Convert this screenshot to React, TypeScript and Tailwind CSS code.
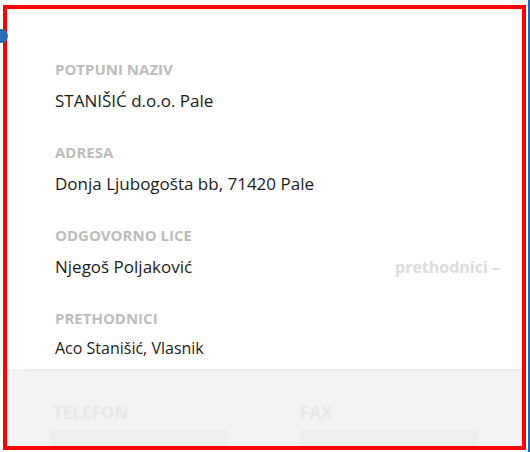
import React from 'react';

const rows = [
  { label: 'Potpuni naziv', value: 'STANIŠIĆ d.o.o. Pale' },
  { label: 'Adresa', value: 'Donja Ljubogošta bb, 71420 Pale' },
  { label: 'Odgovorno lice', value: 'Njegoš Poljaković', extra: 'prethodnici –' },
];

export default function App() {
  return (
    <div
      className="relative w-[530px] h-[452px] overflow-hidden bg-white pt-[5px] pl-[3px] pr-[4px]"
      style={{ fontFamily: '"Open Sans", "Noto Sans", sans-serif' }}
    >
      {/* blue edge on the right */}
      <div className="absolute right-0 top-0 h-full w-[2px] bg-[#1f68b3]" />
      {/* blue handle peeking from the left */}
      <div className="absolute left-[-6px] top-[29px] z-20 h-[14px] w-[14px] rounded-full bg-[#2a6cb6]" />

      <div className="relative z-10 flex h-[445px] w-[523px] flex-col overflow-hidden border-4 border-[#ff0000]">
        <div className="bg-white pl-[48px] pr-[22px] pt-[50px] pb-[10px]">
          {rows.map((r) => (
            <div key={r.label} className="mb-[29px]">
              <div className="text-[15px] font-bold uppercase leading-[20px] text-[#bdbdbd]">{r.label}</div>
              <div className="mt-[10px] flex items-baseline justify-between">
                <span className="text-[17px] leading-[24px] text-[#1c1c1c]">{r.value}</span>
                {r.extra && (
                  <span className="text-[16px] font-bold text-[#dcdcdc]">{r.extra}</span>
                )}
              </div>
            </div>
          ))}
          <div>
            <div className="text-[15px] font-bold uppercase leading-[20px] text-[#bdbdbd]">Prethodnici</div>
            <div className="mt-[9px] text-[16px] leading-[22px] text-[#1c1c1c]">Aco Stanišić, Vlasnik</div>
          </div>
        </div>

        <div className="flex-1 bg-[#f3f3f3]">
          <div className="ml-[18px] h-[2px] bg-[#ececec]" />
          <div className="flex gap-[73px] pl-[43px] pt-[30px]">
            <div className="w-[177px]">
              <div className="pl-[3px] text-[17px] font-bold leading-[24px] text-[#e8e8e8]">TELEFON</div>
              <div className="mt-[5px] h-[30px] bg-[#eeeeee]" />
            </div>
            <div className="w-[178px]">
              <div className="text-[17px] font-bold leading-[24px] text-[#e8e8e8]">FAX</div>
              <div className="mt-[5px] h-[30px] bg-[#eeeeee]" />
            </div>
          </div>
        </div>
      </div>
    </div>
  );
}
